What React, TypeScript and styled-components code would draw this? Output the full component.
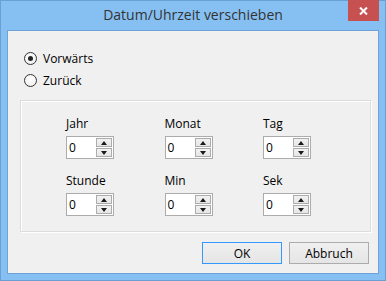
import React from 'react'
import styled, { createGlobalStyle } from 'styled-components'

const GlobalStyle = createGlobalStyle`
    html, body {
        margin: 0;
        padding: 0;
        background: #86c0f2;
    }
    * {
        box-sizing: border-box;
    }
`

const uiFont = `"Segoe UI", "Open Sans", "Noto Sans", sans-serif`

const Window = styled.div`
    position: relative;
    width: 386px;
    height: 281px;
    display: flex;
    flex-direction: column;
    background: #86c0f2;
    border: 1px solid #6a9fd6;
    font-family: ${uiFont};
`

const TitleBar = styled.div`
    height: 29px;
    display: flex;
    align-items: center;
    justify-content: center;
`

const Title = styled.div`
    font-size: 14px;
    color: #333333;
    margin-top: -3px;
`

const CloseButton = styled.div`
    position: absolute;
    top: -1px;
    right: 6px;
    width: 31px;
    height: 21px;
    background: #c75050;
    display: flex;
    align-items: center;
    justify-content: center;
`

const Client = styled.div`
    flex: 1;
    margin: 0 6px 6px;
    border: 1px solid #6fa3d8;
    background: #f0f0f0;
    padding: 16px 9px 9px 0;
    display: flex;
    flex-direction: column;
    font-size: 12px;
    color: #000000;
`

const RadioList = styled.div`
    display: flex;
    flex-direction: column;
    padding-left: 16px;
`

const RadioRow = styled.label`
    height: 22px;
    display: flex;
    align-items: center;
    gap: 6px;
`

const RadioCircle = styled.span<{ $checked?: boolean }>`
    width: 13px;
    height: 13px;
    border-radius: 50%;
    border: 1px solid #333333;
    background: radial-gradient(circle at 50% 40%, #ffffff, #ececec);
    display: flex;
    align-items: center;
    justify-content: center;
    &::after {
        content: '';
        width: 5px;
        height: 5px;
        border-radius: 50%;
        background: #222222;
        display: ${p => (p.$checked ? 'block' : 'none')};
    }
`

const GroupBox = styled.div`
    margin: 9px 0 0 12px;
    width: 351px;
    height: 132px;
    border: 1px solid #dcdcdc;
    box-shadow: inset 1px 1px 0 #ffffff, 1px 1px 0 #ffffff;
    padding: 15px 0 0 45px;
    display: grid;
    grid-template-columns: repeat(3, 98.5px);
    row-gap: 14px;
    align-content: start;
`

const Field = styled.div`
    display: flex;
    flex-direction: column;
    gap: 5px;
`

const FieldLabel = styled.div`
    height: 15px;
    line-height: 15px;
`

const Spinner = styled.div`
    width: 48px;
    height: 23px;
    border: 1px solid #acacac;
    background: #ffffff;
    display: flex;
    align-items: stretch;
    padding: 1px;
`

const SpinValue = styled.div`
    flex: 1;
    line-height: 19px;
    padding-left: 1px;
`

const SpinButtons = styled.div`
    width: 16px;
    display: flex;
    flex-direction: column;
    gap: 1px;
`

const SpinButton = styled.div<{ $down?: boolean }>`
    flex: 1;
    border: 1px solid #acacac;
    background: linear-gradient(#f2f2f2, #e6e6e6);
    display: flex;
    align-items: center;
    justify-content: center;
    &::after {
        content: '';
        width: 0;
        height: 0;
        border-left: 3.5px solid transparent;
        border-right: 3.5px solid transparent;
        ${p =>
            p.$down
                ? 'border-top: 4px solid #1a1a1a;'
                : 'border-bottom: 4px solid #1a1a1a;'}
    }
`

const ButtonRow = styled.div`
    margin-top: 10px;
    display: flex;
    justify-content: flex-end;
    gap: 7px;
`

const DialogButton = styled.div<{ $default?: boolean }>`
    width: 80px;
    height: 22px;
    border: 1px solid ${p => (p.$default ? '#3399ff' : '#acacac')};
    background: linear-gradient(#f0f0f0, #e5e5e5);
    display: flex;
    align-items: center;
    justify-content: center;
`

const fields = ['Jahr', 'Monat', 'Tag', 'Stunde', 'Min', 'Sek']

const App: React.FC = () => {
    return (
        <>
            <GlobalStyle />
            <Window>
                <TitleBar>
                    <Title>Datum/Uhrzeit verschieben</Title>
                </TitleBar>
                <CloseButton>
                    <svg width="9" height="8" viewBox="0 0 9 8">
                        <path d="M1 0.5 L8 7.5 M8 0.5 L1 7.5" stroke="#ffffff" strokeWidth="2" />
                    </svg>
                </CloseButton>
                <Client>
                    <RadioList>
                        <RadioRow>
                            <RadioCircle $checked />
                            Vorwärts
                        </RadioRow>
                        <RadioRow>
                            <RadioCircle />
                            Zurück
                        </RadioRow>
                    </RadioList>
                    <GroupBox>
                        {fields.map(name => (
                            <Field key={name}>
                                <FieldLabel>{name}</FieldLabel>
                                <Spinner>
                                    <SpinValue>0</SpinValue>
                                    <SpinButtons>
                                        <SpinButton />
                                        <SpinButton $down />
                                    </SpinButtons>
                                </Spinner>
                            </Field>
                        ))}
                    </GroupBox>
                    <ButtonRow>
                        <DialogButton $default>OK</DialogButton>
                        <DialogButton>Abbruch</DialogButton>
                    </ButtonRow>
                </Client>
            </Window>
        </>
    )
}

export default App
